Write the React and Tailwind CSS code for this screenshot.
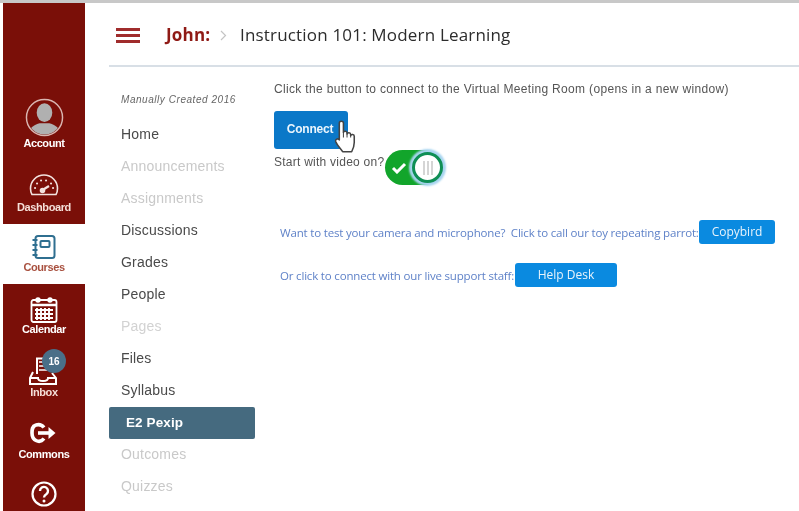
import React from "react";

const Item = ({ h, label, labelClass = "text-white", children }) => (
  <div className={`flex flex-col items-center justify-end relative shrink-0 ${h}`}>
    {children}
    <span className={`font-['Liberation_Sans',sans-serif] text-[11px] leading-[13px] tracking-[-0.4px] font-semibold ${labelClass}`}>{label}</span>
  </div>
);

const nav = [
  ["Home", "text-[#4a4a4a]"],
  ["Announcements", "text-[#c9c9c9]"],
  ["Assignments", "text-[#c9c9c9]"],
  ["Discussions", "text-[#4a4a4a]"],
  ["Grades", "text-[#4a4a4a]"],
  ["People", "text-[#4a4a4a]"],
  ["Pages", "text-[#d2d2d2]"],
  ["Files", "text-[#4a4a4a]"],
  ["Syllabus", "text-[#4a4a4a]"],
  ["E2 Pexip", "active"],
  ["Outcomes", "text-[#c9c9c9]"],
  ["Quizzes", "text-[#c9c9c9]"],
];

export default function App() {
  return (
    <div className="w-[799px] h-[511px] overflow-hidden bg-white border-t-[3px] border-[#c8c8c8] flex pl-[3px] blur-[0.6px] font-['Liberation_Sans',sans-serif]">
      <div className="w-[82px] shrink-0 flex flex-col">
        <div className="h-[221px] bg-[#7a0f08] flex flex-col justify-end">
          <Item h="h-[64px] pb-[10px]" label="Account">
            <svg width="39" height="39" viewBox="0 0 40 40">
              <defs><clipPath id="c"><circle cx="20" cy="20" r="17.5" /></clipPath></defs>
              <circle cx="20" cy="20" r="18.500" fill="#7a0f08" stroke="#d9b5b0" strokeWidth="1.500" />
              <g clipPath="url(#c)" fill="#b0b0b0">
                <ellipse cx="20" cy="15" rx="8" ry="9.500" />
                <path d="M2 40c1-9 8-13 13-14h10c5 1 12 5 13 14z" />
              </g>
            </svg>
          </Item>
          <Item h="h-[64px]" label="Dashboard" labelClass="text-[#f5dfd8] pb-[10px]">
            <svg width="30" height="22" viewBox="0 0 30 22" fill="none" stroke="#f3e3df" strokeWidth="1.600" className="mb-[5px]">
              <path d="M3 20.500C1.500 18 1.500 16 1.500 14.500a13.500 13.500 0 0 1 27 0c0 2-.2 4-1.500 6z" />
              <path d="M6 14h.1M8 9.500h.1M12 6.500h.1M17 6.500h.1M22 9.500h.1M24 14h.1" strokeWidth="2" strokeLinecap="round" />
              <path d="M12 17l8-5" strokeWidth="2.200" />
              <circle cx="13.500" cy="16.500" r="2" fill="#f3e3df" />
            </svg>
          </Item>
        </div>
        <div className="h-[60px] bg-white">
          <Item h="h-[50px]" label="Courses" labelClass="text-[#a8503f]">
            <svg width="26" height="26" viewBox="0 0 26 26" fill="none" stroke="#2f6f90" strokeWidth="2" className="mb-[1px]">
              <rect x="4.500" y="2" width="19" height="22" rx="2.500" />
              <rect x="9.500" y="7" width="9" height="6" rx="1" />
              <path d="M1.500 6h5M1.500 11h5M1.500 16h5M1.500 21h5" />
            </svg>
          </Item>
        </div>
        <div className="flex-1 bg-[#7a0f08] flex flex-col">
          <Item h="h-[52px]" label="Calendar">
            <svg width="28" height="26" viewBox="0 0 28 26" fill="none" stroke="#fff" strokeWidth="1.800">
              <rect x="1.500" y="3" width="25" height="22" rx="2" />
              <path d="M1.500 8h25" strokeWidth="2.500" />
              <circle cx="8" cy="3" r="1.800" />
              <circle cx="20" cy="3" r="1.800" />
              <path d="M7 11v12M11 11v12M15 11v12M19 11v12M5 13h18M5 17h18M5 21h18" strokeWidth="1.900" />
            </svg>
          </Item>
          <Item h="h-[63px]" label="Inbox" labelClass="text-[#f5dfd8]">
            <svg width="30" height="30" viewBox="0 0 30 30" fill="none" stroke="#fff" strokeWidth="2" className="mr-[2px]">
              <path d="M9 18V2.500h8" />
              <path d="M11 6h5M11 10h6M11 14h8" strokeWidth="1.500" />
              <path d="M5 16L2 22v6h26v-6l-4-5" />
              <path d="M2 22h8c0 2 2 3 5 3s5-1 5-3h8" />
            </svg>
            <span className="absolute left-[39px] top-[13px] w-[24px] h-[24px] rounded-full bg-[#4a6f88] text-white text-[10px] font-bold flex items-center justify-center">16</span>
          </Item>
          <Item h="h-[62px]" label="Commons">
            <svg width="28" height="22" viewBox="0 0 28 22" fill="none" stroke="#fff" strokeWidth="3.600" className="mb-[4px]">
              <path d="M14 5.500a7.500 7.500 0 0 0-8-2.500C2 4 2 7.500 2 11s1 6 4 7.500 6 .5 8-2" />
              <path d="M8 11h15" />
              <path d="M18.500 5l7 6-7 6z" fill="#fff" stroke="none" />
            </svg>
          </Item>
          <div className="flex justify-center pt-[20px]">
            <svg width="26" height="26" viewBox="0 0 26 26" fill="none" stroke="#fff" strokeWidth="2.200">
              <circle cx="13" cy="13" r="11.500" />
              <path d="M9 10a4 4 0 1 1 6.500 3c-1.500 1-2.500 1.800-2.500 3.500" strokeWidth="2.400" />
              <circle cx="13" cy="20" r="1.500" fill="#fff" stroke="none" />
            </svg>
          </div>
        </div>
      </div>

      <div className="flex-1 flex flex-col pl-[24px]">
        <div className="h-[64px] shrink-0 flex items-center border-b-2 border-[#d8dfe6] pt-[1px]">
          <div className="ml-[7px] mt-[2px] w-[24px] flex flex-col gap-[3px]">
            <span className="block h-[3px] bg-[#a02c2c]" />
            <span className="block h-[3px] bg-[#a02c2c]" />
            <span className="block h-[3px] bg-[#a02c2c]" />
          </div>
          <span className="ml-[26px] w-[45px] font-['Open_Sans',sans-serif] text-[17px] font-bold text-[#8f1a15] tracking-[0.2px]">John:</span>
          <svg width="7" height="11" viewBox="0 0 7 11" fill="none" stroke="#c4c4c4" strokeWidth="1.200" className="ml-[9px] mt-[2px]"><path d="M1 1l4.500 4.500L1 10" /></svg>
          <span className="ml-[13px] font-['Open_Sans',sans-serif] text-[17px] text-[#2c2c2c] tracking-[0.18px] whitespace-nowrap">Instruction 101: Modern Learning</span>
        </div>

        <div className="flex flex-1">
          <div className="w-[146px] shrink-0 flex flex-col pt-[26px]">
            <div className="pl-[12px] h-[17px] text-[10px] leading-[13px] italic text-[#666] tracking-[0.55px] whitespace-nowrap">Manually Created 2016</div>
            <div className="flex flex-col pt-[8px]">
              {nav.map(([t, c]) =>
                c === "active" ? (
                  <div key={t} className="h-[32px] mt-[1px] mb-[-1px] flex items-center pl-[17px] bg-[#456a7f] rounded-[2px] text-white text-[13.500px] font-bold tracking-[0.1px]">{t}</div>
                ) : (
                  <div key={t} className={`h-[32px] flex items-center pl-[12px] text-[14px] tracking-[0.2px] ${c}`}>{t}</div>
                )
              )}
            </div>
          </div>

          <div className="flex-1 pl-[19px] pt-[14px] flex flex-col items-start">
            <div className="text-[12px] leading-[16px] text-[#555] tracking-[0.33px] whitespace-nowrap">Click the button to connect to the Virtual Meeting Room (opens in a new window)</div>
            <div className="relative mt-[14px] w-[74px] h-[38px] rounded-[3px] bg-[#0b78c8] text-[#eaf5fd] text-[12px] font-bold tracking-[-0.2px] flex items-center justify-center pb-[3px] pr-[2px]">
              Connect
              <svg width="26" height="33" viewBox="0 0 24 32" className="absolute left-[59px] top-[9px]" fill="#fff" stroke="#444" strokeWidth="1.500" strokeLinejoin="round">
                <path d="M5.500 3c0-2.500 4-2.500 4 0v9c.5-1.500 3.500-1.500 3.500.500v1c.5-1.500 3.500-1.500 3.500.500v1c.5-1.500 3.500-1.200 3.500.800v6c0 4-1.500 7-2.500 9H9c-1.500-2-6-7-7-10-.6-2 2-3.500 3.500-1.500V3z" />
                <path d="M9.500 12v5M13 13v4M16.500 14.500V17" strokeWidth="1" />
              </svg>
            </div>
            <div className="flex items-start">
              <span className="text-[12px] leading-[16px] text-[#555] tracking-[0.25px] mt-[5px] whitespace-nowrap">Start with video on?</span>
              <div className="relative w-[56px] h-[35px] rounded-full bg-[#12a52b] ml-[1px] mt-[1px]">
                <svg width="16" height="12" viewBox="0 0 16 12" fill="none" stroke="#fff" strokeWidth="3" className="absolute left-[6px] top-[12px]"><path d="M2 6l4 4 8-8" /></svg>
                <div className="absolute left-[27px] top-[2px] w-[31px] h-[31px] rounded-full bg-white border-[3px] border-[#0f8f55] shadow-[0_0_2px_3px_#a8d5f0] flex items-center justify-center gap-[2px]">
                  <span className="block w-[2px] h-[14px] bg-[#d5d5d5]" />
                  <span className="block w-[2px] h-[14px] bg-[#d5d5d5]" />
                  <span className="block w-[2px] h-[14px] bg-[#d5d5d5]" />
                </div>
              </div>
            </div>

            <div className="mt-[35px] ml-[6px] flex items-center font-['Open_Sans',sans-serif] text-[11.500px] text-[#5f82c8] tracking-[-0.18px] whitespace-nowrap">
              <span className="w-[419px] pt-[1px]">Want to test your camera and microphone?&nbsp; Click to call our toy repeating parrot:</span>
              <span className="w-[76px] h-[24px] rounded-[3px] bg-[#0a8ae0] text-[#e8f3fb] text-[12px] tracking-normal flex items-center justify-center">Copybird</span>
            </div>
            <div className="mt-[19px] ml-[6px] flex items-center font-['Open_Sans',sans-serif] text-[11.500px] text-[#5f82c8] tracking-[-0.18px] whitespace-nowrap">
              <span className="w-[235px] pt-[1px]">Or click to connect with our live support staff:</span>
              <span className="w-[102px] h-[24px] rounded-[3px] bg-[#0a8ae0] text-[#e8f3fb] text-[12px] tracking-normal flex items-center justify-center">Help Desk</span>
            </div>
          </div>
        </div>
      </div>
    </div>
  );
}
